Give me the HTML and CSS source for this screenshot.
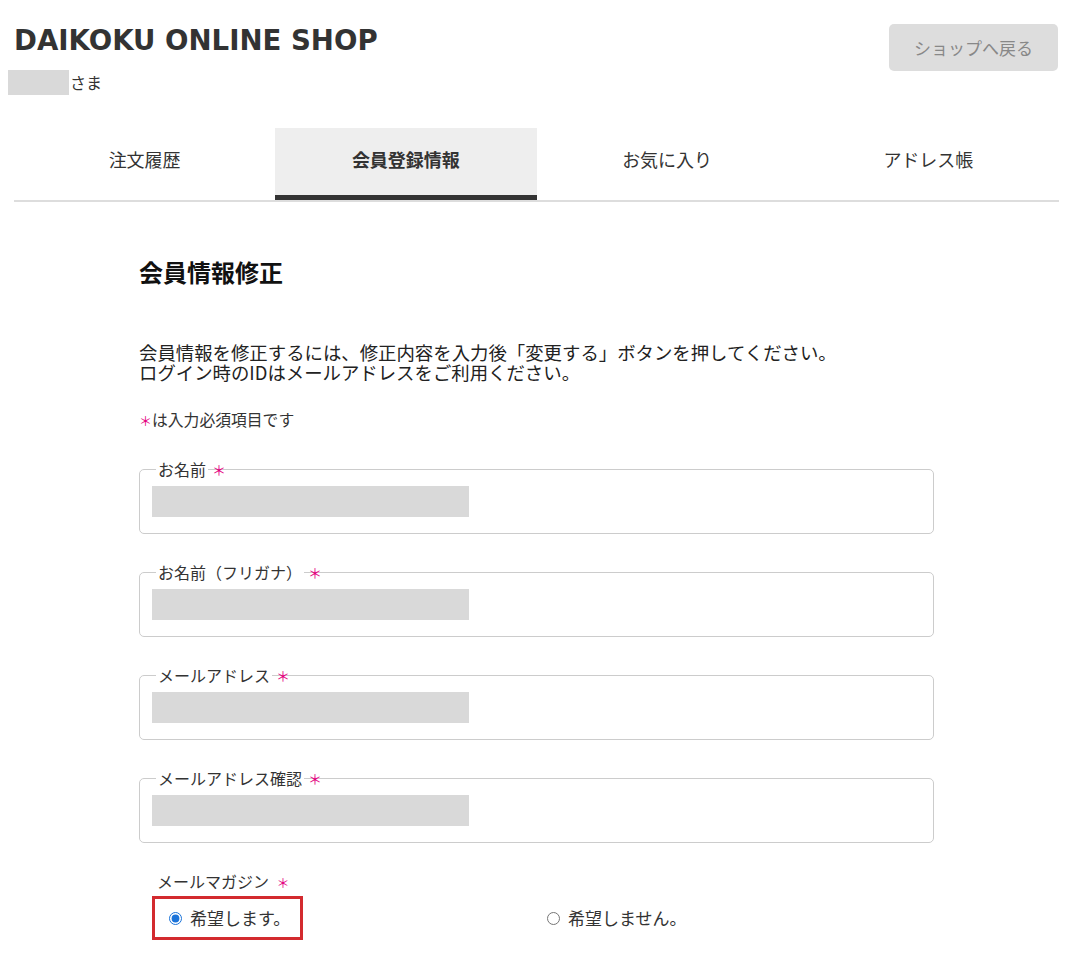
FILE: index.html
```html
<!DOCTYPE html>
<html lang="ja">
<head>
  <meta charset="UTF-8">
  <meta name="viewport" content="width=device-width, initial-scale=1.0">
  <title>DAIKOKU ONLINE SHOP - 会員情報修正</title>
  <link rel="stylesheet" href="styles.css">
</head>
<body>
  <div class="page">
    <header class="header">
      <div class="header-left">
        <h1 class="logo">DAIKOKU ONLINE SHOP</h1>
        <div class="user">
          <span class="mask user-mask"></span>
          <span>さま</span>
        </div>
      </div>
      <a class="back-btn" href="#">ショップへ戻る</a>
    </header>

    <nav class="tabs">
      <a href="#" class="tab">注文履歴</a>
      <a href="#" class="tab active">会員登録情報</a>
      <a href="#" class="tab">お気に入り</a>
      <a href="#" class="tab">アドレス帳</a>
    </nav>

    <main class="content">
      <h2 class="title">会員情報修正</h2>
      <p class="lead">会員情報を修正するには、修正内容を入力後「変更する」ボタンを押してください。<br>ログイン時のIDはメールアドレスをご利用ください。</p>
      <p class="note"><span class="req-inline">＊</span>は入力必須項目です</p>

      <form class="form">
        <fieldset class="field">
          <legend>お名前<span class="req">＊</span></legend>
          <div class="mask input-mask"></div>
        </fieldset>
        <fieldset class="field">
          <legend>お名前（フリガナ）<span class="req">＊</span></legend>
          <div class="mask input-mask"></div>
        </fieldset>
        <fieldset class="field">
          <legend>メールアドレス<span class="req">＊</span></legend>
          <div class="mask input-mask"></div>
        </fieldset>
        <fieldset class="field">
          <legend>メールアドレス確認<span class="req">＊</span></legend>
          <div class="mask input-mask"></div>
        </fieldset>

        <div class="magazine">
          <div class="magazine-label">メールマガジン <span class="req-inline">＊</span></div>
          <div class="radios">
            <label class="radio highlight"><input type="radio" name="mail" checked> 希望します。</label>
            <label class="radio"><input type="radio" name="mail"> 希望しません。</label>
          </div>
        </div>
      </form>
    </main>
  </div>
</body>
</html>
```

FILE: styles.css
```css
body {
  margin: 0;
  padding: 0;
  font-family: "Noto Sans CJK JP", "Noto Sans", sans-serif;
  color: #333;
  background: #fff;
}
.page {
  padding: 0 21px 0 14px;
}
.header {
  display: flex;
  justify-content: space-between;
  align-items: flex-start;
}
.logo {
  margin: 23px 0 0;
  font-family: "DejaVu Sans", sans-serif;
  font-size: 27.6px;
  line-height: 35px;
  font-weight: bold;
  color: #333;
}
.user {
  display: flex;
  align-items: center;
  margin: 12px 0 0 -6px;
  font-size: 16px;
  line-height: 25px;
}
.mask {
  background: #d9d9d9;
}
.user-mask {
  display: inline-block;
  width: 61px;
  height: 25px;
  margin-right: 1px;
}
.back-btn {
  display: flex;
  align-items: center;
  justify-content: center;
  width: 169px;
  height: 47px;
  margin-top: 24px;
  margin-right: 1px;
  background: #ddd;
  border-radius: 5px;
  color: #888;
  font-size: 17px;
  text-decoration: none;
}
.tabs {
  display: grid;
  grid-template-columns: repeat(4, 1fr);
  margin-top: 33px;
  border-bottom: 2px solid #ddd;
}
.tab {
  box-sizing: border-box;
  height: 72px;
  padding-top: 19px;
  text-align: center;
  font-size: 18px;
  line-height: 24px;
  color: #333;
  text-decoration: none;
}
.tab.active {
  background: #eee;
  font-weight: bold;
  box-shadow: inset 0 -5px 0 #333;
  margin-bottom: -1px;
}
.content {
  max-width: 795px;
  margin: 0 auto;
}
.title {
  margin: 54px 0 0;
  font-size: 24px;
  line-height: 32px;
  font-weight: bold;
  color: #111;
}
.lead {
  margin: 54px 0 0;
  font-size: 18.4px;
  line-height: 20px;
  color: #222;
}
.note {
  margin: 28px 0 0;
  font-size: 15.8px;
  line-height: 20px;
  color: #333;
}
.req-inline {
  color: #e4007f;
  font-size: 13px;
}
.form {
  margin-top: 28px;
}
.field {
  margin: 0 0 28px;
  padding: 7px 12px 16px;
  border: 1px solid #ccc;
  border-radius: 5px;
}
.field legend {
  position: relative;
  margin-left: 4px;
  padding: 0 2px;
  font-size: 16px;
  line-height: 20px;
  color: #333;
}
.req {
  position: absolute;
  left: calc(100% + 4px);
  top: 0;
  color: #e4007f;
  font-size: 14px;
}
.input-mask {
  width: 317px;
  height: 31px;
}
.magazine-label {
  padding-left: 18px;
  font-size: 16px;
  line-height: 20px;
  color: #333;
}
.magazine-label .req-inline {
  margin-left: 4px;
}
.radios {
  display: grid;
  grid-template-columns: 1fr 1fr;
  align-items: center;
  margin-top: 3px;
  padding-left: 13px;
}
.radio {
  display: inline-flex;
  align-items: center;
  gap: 8px;
  font-size: 17px;
  line-height: 20px;
  color: #333;
  padding-left: 0;
}
.radio input {
  width: 13px;
  height: 13px;
  margin: 0 0 0 4px;
  accent-color: #1a73d9;
}
.radio.highlight {
  justify-self: start;
  box-sizing: border-box;
  height: 44px;
  width: 151px;
  padding: 0 0 0 10px;
  border: 3px solid #d32a2f;
}
```
